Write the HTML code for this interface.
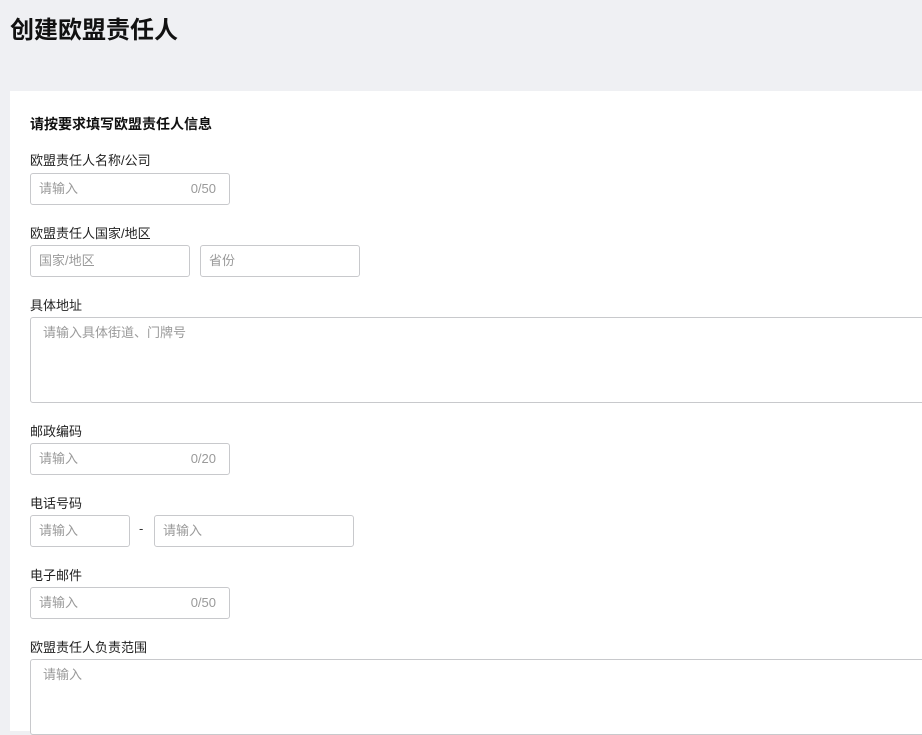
<!DOCTYPE html>
<html style="margin:0;width:922px;height:735px;overflow:hidden"><head><meta charset="utf-8"><style>
body{margin:0;width:922px;height:735px;background:#eff0f3;font-family:"Liberation Sans","Noto Sans CJK SC",sans-serif;position:relative;overflow:hidden;color:#111}
.a{position:absolute}
h1{position:absolute;left:10px;top:14px;margin:0;font-size:24px;font-weight:bold;line-height:34px}
.card{position:absolute;left:10px;top:91px;width:930px;height:640px;background:#fff}
.l{position:absolute;left:30px;font-size:13px;line-height:18px;color:#222}
.i{position:absolute;border:1px solid #c8c9cc;border-radius:3px;background:#fff;box-sizing:border-box;font-size:13px;color:#9a9a9a;padding:0 8px;line-height:30px}
.c{position:absolute;right:13px;top:0}
</style></head><body>
<h1>创建欧盟责任人</h1>
<div class="card"></div>
<div class="a" style="left:30px;top:114px;font-size:14px;font-weight:bold;line-height:20px">请按要求填写欧盟责任人信息</div>
<div class="l" style="top:152px">欧盟责任人名称/公司</div>
<div class="i" style="left:30px;top:173px;width:200px;height:32px">请输入<span class="c">0/50</span></div>
<div class="l" style="top:225px">欧盟责任人国家/地区</div>
<div class="i" style="left:30px;top:245px;width:160px;height:32px">国家/地区</div>
<div class="i" style="left:200px;top:245px;width:160px;height:32px">省份</div>
<div class="l" style="top:297px">具体地址</div>
<div class="i" style="left:30px;top:317px;width:900px;height:86px;padding:0 12px;line-height:30px">请输入具体街道、门牌号</div>
<div class="l" style="top:423px">邮政编码</div>
<div class="i" style="left:30px;top:443px;width:200px;height:32px">请输入<span class="c">0/20</span></div>
<div class="l" style="top:495px">电话号码</div>
<div class="i" style="left:30px;top:515px;width:100px;height:32px">请输入</div>
<div class="a" style="left:139px;top:521px;font-size:13px;color:#333">-</div>
<div class="i" style="left:154px;top:515px;width:200px;height:32px">请输入</div>
<div class="l" style="top:567px">电子邮件</div>
<div class="i" style="left:30px;top:587px;width:200px;height:32px">请输入<span class="c">0/50</span></div>
<div class="l" style="top:639px">欧盟责任人负责范围</div>
<div class="i" style="left:30px;top:659px;width:900px;height:76px;padding:0 12px">请输入</div>
</body></html>
